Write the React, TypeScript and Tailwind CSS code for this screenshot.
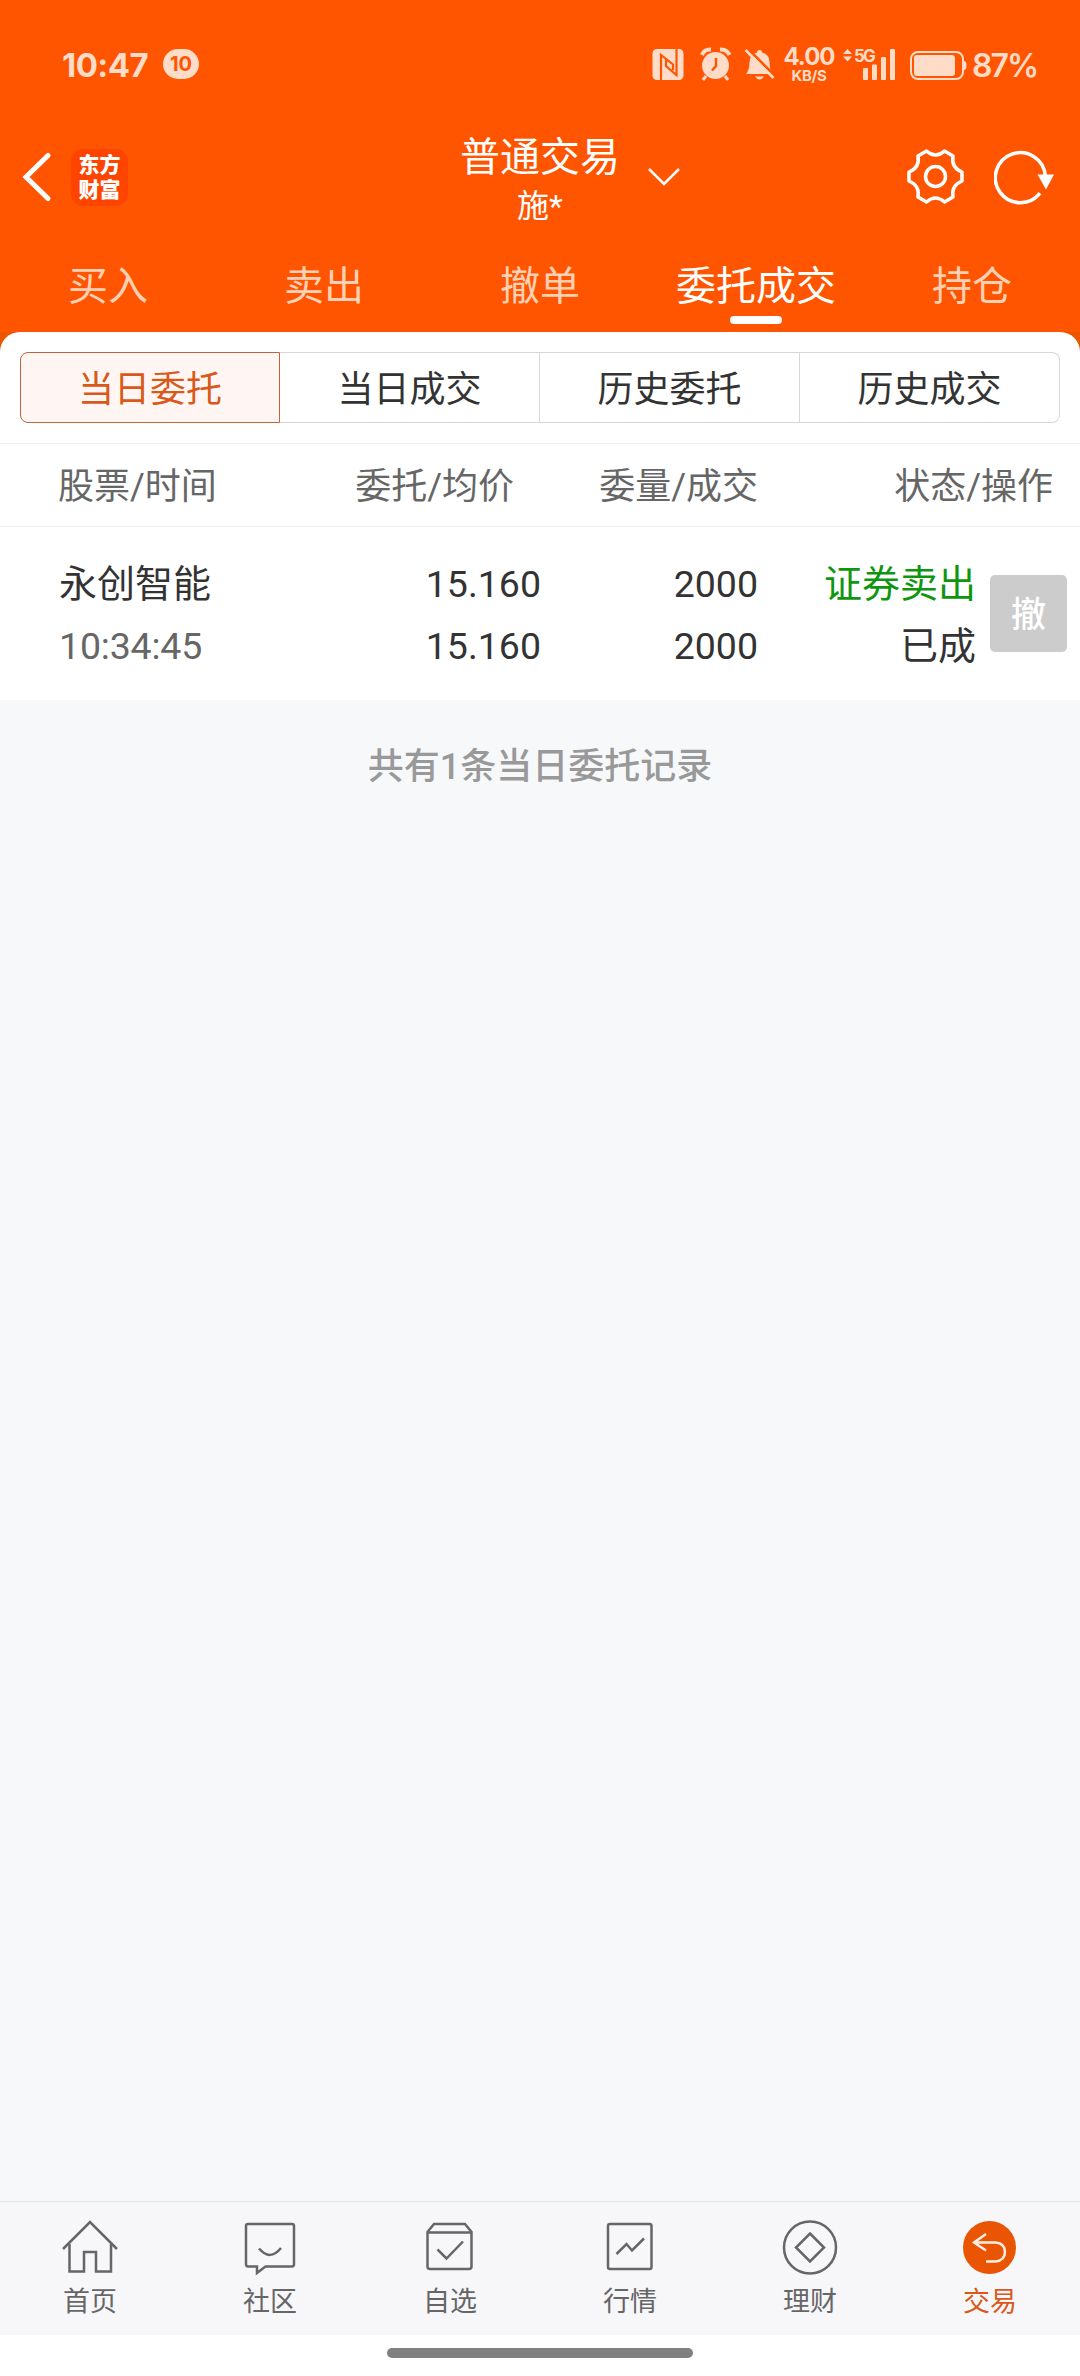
import type { ReactNode } from 'react';

const tabs = ['买入', '卖出', '撤单', '委托成交', '持仓'];
const segments = ['当日委托', '当日成交', '历史委托', '历史成交'];

const orders = [
  {
    name: '永创智能',
    time: '10:34:45',
    price: '15.160',
    avgPrice: '15.160',
    amount: '2000',
    filled: '2000',
    side: '证券卖出',
    status: '已成',
  },
];

const navItems: { label: string; icon: ReactNode; active?: boolean }[] = [
  {
    label: '首页',
    icon: (
      <>
        <path d="M3 29 30 2 57 29" />
        <path d="M9.500 24V51.500H24V32H36V51.500H51V24" />
      </>
    ),
  },
  {
    label: '社区',
    icon: (
      <>
        <path d="M8 4H52Q54 4 54 6V44Q54 46.500 52 46.500H25.500L17 53V46.500H8Q6 46.500 6 44V6Q6 4 8 4Z" />
        <path d="M19 28.500Q30 41.500 41 28" />
      </>
    ),
  },
  {
    label: '自选',
    icon: (
      <>
        <path d="M7.500 12V46.500Q7.500 49 10 49H49Q51.500 49 51.500 46.500V12L45 4H14Z" />
        <path d="M7.500 12.500H51.500M17.500 29.500 26.500 38.500 43 21.500" />
      </>
    ),
  },
  {
    label: '行情',
    icon: (
      <>
        <rect x="8" y="4" width="43.500" height="45" rx="2" />
        <path d="M16.500 34 26.500 24 32 30.500 44 18.500" />
      </>
    ),
  },
  {
    label: '理财',
    icon: (
      <>
        <circle cx="30" cy="27.500" r="26" />
        <path d="M30 13.500 44 27.500 30 41.500 16 27.500Z" />
      </>
    ),
  },
  {
    label: '交易',
    active: true,
    icon: (
      <>
        <circle cx="29.500" cy="27.500" r="26.500" fill="#ea5504" stroke="none" />
        <path
          d="M26 14 14 22.500 26 30.500M15 22.500H35.500Q45 23.500 45 31.500 45 40.500 35.500 41.500H26"
          stroke="#ffeee2"
        />
      </>
    ),
  },
];

function StatusBar() {
  return (
    <div className="flex h-[130px] items-start pl-[62px] pr-[42px] pt-[44px] font-['Inter'] text-[#ffdcc8]">
      <span className="w-[101px] text-[33px] font-bold leading-[42px] tracking-[-0.6px]">10:47</span>
      <span className="mt-[5px] flex h-[30px] w-[36px] items-center justify-center rounded-full bg-[#ffdcc8] text-[20px] font-bold text-[#ff5500]">
        10
      </span>
      <svg className="ml-auto h-[42px] w-[126px] shrink-0" viewBox="650 44 126 42" fill="currentColor">
        <rect x="652.500" y="49" width="31" height="31" rx="4.500" />
        <g fill="none" stroke="#ff5500" strokeWidth="2.200">
          <path d="M661 80V55L673 64.500V70" />
          <path d="M676.500 49V75L666 66V60" />
        </g>
        <circle cx="715.500" cy="65.500" r="13.500" />
        <path d="M706 76 703 80M725 76 728 80" stroke="currentColor" strokeWidth="3" />
        <path d="M702 55Q704 49 711 49.500M720 49.500Q727 49 729.500 55" fill="none" stroke="currentColor" strokeWidth="4" />
        <path d="M716 58V66L712 70.500" fill="none" stroke="#ff5500" strokeWidth="2.500" />
        <path d="M746 74Q749.500 70 749.500 62 750 54 757 52.500 757 50 759.500 50 762 50 762 52.500 769.500 54 769.500 62 769.500 70 773 74ZM755 76.500H764Q762 79.500 759.500 79.500 757 79.500 755 76.500Z" />
        <path d="M747 48 776 77" stroke="#ff5500" strokeWidth="3" />
        <path d="M745.500 50 773.500 78" stroke="currentColor" strokeWidth="2.500" />
      </svg>
      <div className="ml-[7px] flex w-[52px] shrink-0 flex-col items-center pt-[2px] font-bold">
        <span className="text-[24px] leading-[22px] tracking-[-1px]">4.00</span>
        <span className="text-[15px] leading-[15px] tracking-[-0.4px]">KB/S</span>
      </div>
      <div className="relative ml-[6px] h-[42px] w-[56px] shrink-0">
        <span className="absolute left-[13px] top-[3px] text-[17px] font-bold leading-[18px] tracking-[-1.8px]">5G</span>
        <svg className="h-[42px] w-[56px]" viewBox="841 44 56 42" fill="currentColor">
          <path d="M843 54 847.500 49 852 54ZM843 56.500 847.500 61.500 852 56.500Z" />
          <rect x="863" y="68" width="5" height="12" rx="1" />
          <rect x="872" y="64.500" width="5" height="15.500" rx="1" />
          <rect x="881" y="57" width="5" height="23" rx="1" />
          <rect x="890" y="49" width="5" height="31" rx="1" />
        </svg>
      </div>
      <svg className="ml-[11px] h-[42px] w-[60px] shrink-0" viewBox="908 44 60 42" fill="currentColor">
        <rect x="911" y="52" width="52" height="27" rx="7" fill="none" stroke="currentColor" strokeWidth="2" />
        <rect x="914" y="55" width="41" height="21" rx="3" />
        <path d="M964 61Q966.500 61 966.500 65.500 966.500 70 964 70Z" />
      </svg>
      <span className="ml-[4px] w-[66px] shrink-0 text-[32px] font-semibold leading-[43px] tracking-[-1.9px]">87%</span>
    </div>
  );
}

function TitleBar() {
  return (
    <div className="grid h-[120px] grid-cols-3 text-white">
      <div className="flex items-start pl-[21px] pt-[19px]">
        <svg className="mt-[2px] h-[52px] w-[32px]" viewBox="0 0 32 52" fill="none" stroke="currentColor" strokeWidth="5" strokeLinecap="round">
          <path d="M27 4.500 5 26 27 47.500" />
        </svg>
        <div className="ml-[18px] flex h-[57px] w-[57px] flex-col items-center justify-center rounded-[12px] bg-[#ff4400] text-[21px] font-black leading-[25px]">
          <span>东方</span>
          <span>财富</span>
        </div>
      </div>
      <div className="relative flex flex-col items-center">
        <span className="mt-[2px] text-[40px] leading-[52px]">普通交易</span>
        <span className="text-[32px] leading-[44px]">施*</span>
        <svg className="absolute left-[286px] top-[36px] h-[22px] w-[36px]" viewBox="0 0 36 22" fill="none" stroke="currentColor" strokeWidth="2.500">
          <path d="M3 3 18 18 33 3" />
        </svg>
      </div>
      <div className="flex items-start justify-end gap-[28px] pr-[24px] pt-[17px]">
        <svg className="h-[60px] w-[60px]" viewBox="0 0 60 60" fill="none" stroke="currentColor" strokeWidth="3.500" strokeLinejoin="round">
          <path d="M20.500 4Q29.500 12 38.500 4L47 9Q45 20.500 56 25V34Q45 38.500 47 50L38.500 55Q29.500 47 20.500 55L12 50Q14 38.500 3 34V25Q14 20.500 12 9Z" />
          <circle cx="29.500" cy="29.500" r="10" />
        </svg>
        <svg className="h-[60px] w-[62px]" viewBox="0 0 62 60" fill="none" stroke="currentColor" strokeWidth="3.500">
          <path d="M46 46.200A25 25 0 1 1 51.300 29" />
          <path d="M43.500 27.500H60L52 42.500Z" fill="currentColor" stroke="none" />
        </svg>
      </div>
    </div>
  );
}

export default function App() {
  return (
    <div className="flex h-[2376px] w-[1080px] flex-col bg-[#f7f8fa] font-['Roboto','Noto_Sans_CJK_SC',sans-serif] text-[#333333]">
      <header className="h-[332px] shrink-0 bg-[#ff5500]">
        <StatusBar />
        <TitleBar />
        <nav className="grid h-[82px] grid-cols-5 text-[40px] leading-[73px]">
          {tabs.map((tab) => (
            <div key={tab} className="flex flex-col items-center">
              <span className={tab === '委托成交' ? 'h-[66px] text-white' : 'h-[66px] text-[#ffd0b3]'}>{tab}</span>
              {tab === '委托成交' && <span className="h-[8px] w-[52px] rounded-full bg-white" />}
            </div>
          ))}
        </nav>
      </header>

      <div className="shrink-0 bg-[#eb5500]">
        <div className="h-[111px] rounded-t-[20px] bg-white px-[20px] pt-[20px]">
          <div className="grid grid-cols-4 grid-rows-[71px] text-center text-[36px] leading-[75px]">
            {segments.map((label, index) => (
              <div
                key={label}
                className={
                  index === 0
                    ? 'rounded-l-[8px] border border-[#c0653a] bg-[#fff6f3] text-[#d9591a]'
                    : 'border border-l-0 border-[#d5d8d8] last:rounded-r-[8px]'
                }
              >
                {label}
              </div>
            ))}
          </div>
        </div>
      </div>

      <section className="shrink-0 bg-white">
        <div className="flex h-[84px] border-y border-[#f0f0f0] text-[36px] leading-[87px] text-[#666666]">
          <span className="w-[273px] pl-[58px]">股票/时间</span>
          <span className="w-[241px] text-right">委托/均价</span>
          <span className="w-[244px] text-right">委量/成交</span>
          <span className="w-[295px] text-right">状态/操作</span>
        </div>
        {orders.map((order) => (
          <div key={order.time} className="flex h-[173px] pt-[26px] text-[38px] leading-[62px]">
            <div className="flex w-[273px] flex-col pl-[59px]">
              <span>{order.name}</span>
              <span className="text-[37.5px] tracking-[-0.2px] text-[#666666]">{order.time}</span>
            </div>
            <div className="flex w-[268px] flex-col text-right text-[37.5px]">
              <span>{order.price}</span>
              <span>{order.avgPrice}</span>
            </div>
            <div className="flex w-[217px] flex-col text-right text-[37.5px]">
              <span>{order.amount}</span>
              <span>{order.filled}</span>
            </div>
            <div className="flex w-[218px] flex-col text-right">
              <span className="text-[#0f960f]">{order.side}</span>
              <span>{order.status}</span>
            </div>
            <button className="ml-[14px] mt-[22px] h-[77px] w-[77px] rounded-[5px] bg-[#cccccc] pt-[4px] text-[35px] font-medium leading-[73px] text-white">
              撤
            </button>
          </div>
        ))}
      </section>

      <p className="mt-[40px] text-center text-[36px] font-medium leading-[54px] text-[#999999]">共有1条当日委托记录</p>

      <nav className="mt-auto grid h-[134px] shrink-0 grid-cols-6 border-t border-[#e4e5e7] bg-[#f7f7fa] pt-[18px]">
        {navItems.map((item) => (
          <div
            key={item.label}
            className={
              item.active
                ? 'flex flex-col items-center text-[27px] leading-[40px] text-[#d9591a]'
                : 'flex flex-col items-center text-[27px] leading-[40px] text-[#666666]'
            }
          >
            <svg className="mb-[6px] h-[56px] w-[60px]" viewBox="0 0 60 56" fill="none" stroke="currentColor" strokeWidth="2.500">
              {item.icon}
            </svg>
            <span>{item.label}</span>
          </div>
        ))}
      </nav>
      <div className="flex h-[41px] shrink-0 justify-center bg-white pt-[13px]">
        <div className="h-[10px] w-[306px] rounded-full bg-[#808080]" />
      </div>
    </div>
  );
}
